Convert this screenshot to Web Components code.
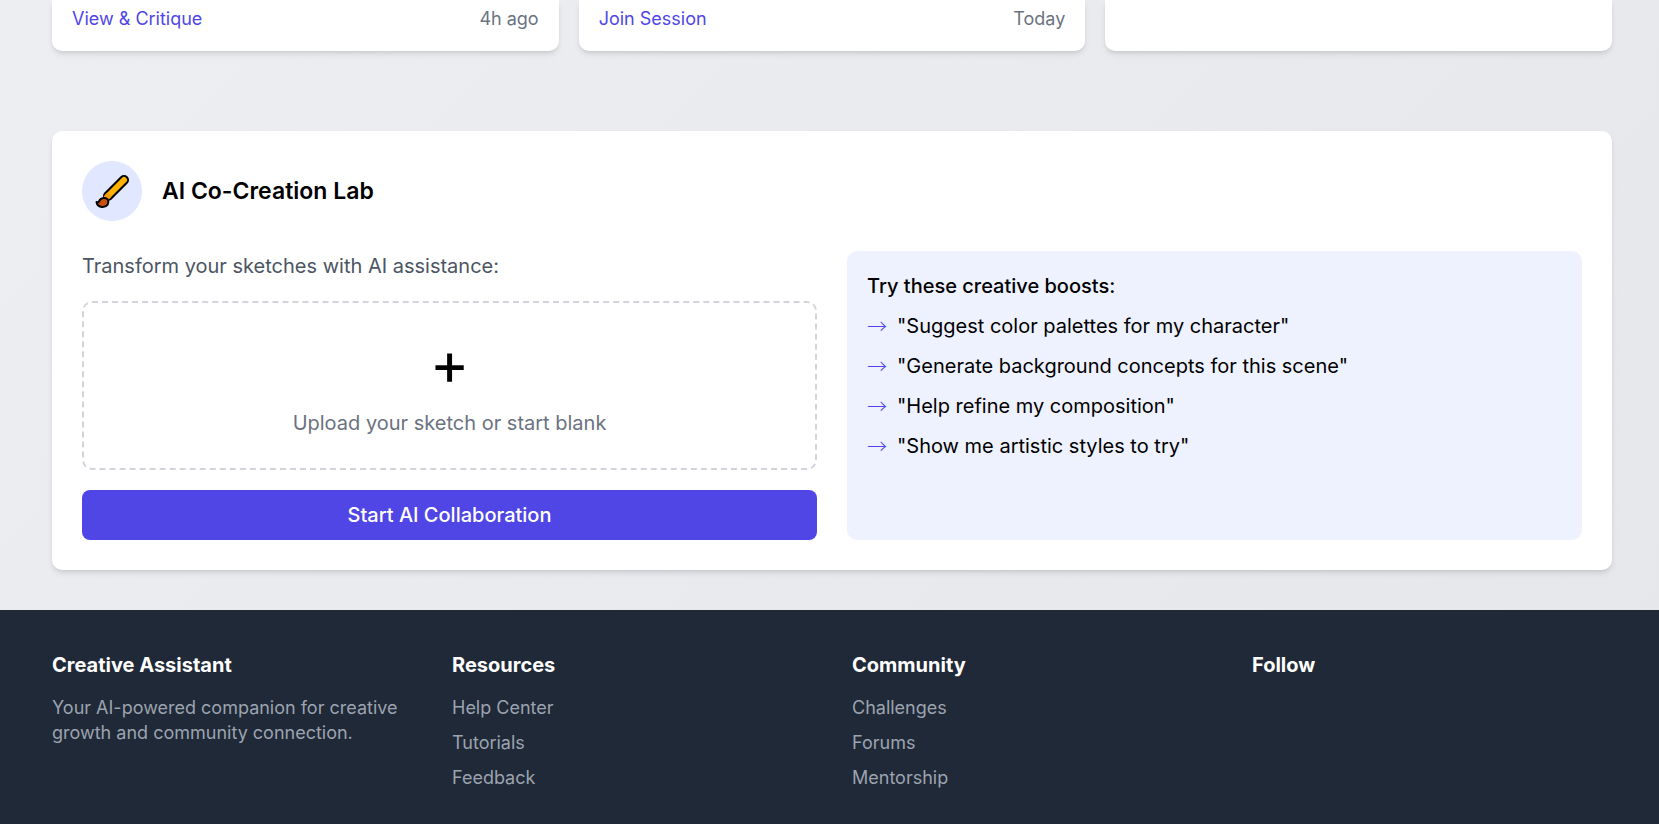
<!DOCTYPE html>
<html lang="en">
<head>
<meta charset="utf-8">
<meta name="viewport" content="width=device-width, initial-scale=1">
<title>Creative Assistant</title>
<style>
  html { --indigo: #4f46e5; }
  body {
    margin: 0;
    font: 20px/30px Inter, "Liberation Sans", sans-serif;
    color: #000;
    background: #e5e7eb;
  }
</style>
</head>
<body>
<creative-app></creative-app>
<script>
const define = (name, html) => {
  const template = document.createElement('template');
  template.innerHTML = html;
  customElements.define(name, class extends HTMLElement {
    constructor() {
      super();
      this.attachShadow({ mode: 'open' }).append(template.content.cloneNode(true));
    }
  });
};

define('feed-card', `
  <style>
    :host { display: block; box-sizing: border-box; padding: 6px 20px 20px; background: #fff;
      border-radius: 0 0 10px 10px; box-shadow: 0 4px 6px -1px rgb(0 0 0 / .1), 0 2px 4px -2px rgb(0 0 0 / .1); }
    .row { display: flex; justify-content: space-between; font-size: 18px; line-height: 25px; color: #6b7280; }
    ::slotted(a) { color: var(--indigo); text-decoration: none; }
  </style>
  <div class="row"><slot name="action"></slot><slot></slot></div>`);

define('brush-icon', `
  <style>
    :host { display: grid; place-items: center; width: 60px; height: 60px; border-radius: 50%; background: #e0e7ff; }
    svg { display: block; width: 36px; height: 36px; }
  </style>
  <svg viewBox="0 0 36 36" aria-hidden="true" fill="none" stroke-linecap="round" stroke-linejoin="round">
    <path stroke="#000" stroke-width="10" d="M14 23 30 7"/>
    <path stroke="#ffb300" stroke-width="6" d="M14 23 30 7"/>
    <path stroke="#f59e0b" stroke-width="6" d="m13 24 1-1"/>
    <path fill="#c8500f" stroke="#000" stroke-width="2" d="M9.500 25q3-.4 4.400 1.800 1.200 2.500-.3 4.800-2.100 2.800-5.600 2.400-4.700-.6-5.500-5 2 .8 2.800-1 .8-2.600 4.200-3Z"/>
  </svg>`);

define('upload-zone', `
  <style>
    :host { display: block; box-sizing: border-box; padding: 30px; border: 2px dashed #d1d5db; border-radius: 10px; text-align: center; }
    .plus { margin-bottom: 15px; font-size: 60px; line-height: 60px; }
    .label { color: #6b7280; }
  </style>
  <div class="plus">+</div>
  <div class="label"><slot></slot></div>`);

define('primary-button', `
  <style>
    :host { display: block; }
    button { display: block; width: 100%; padding: 10px 20px; border: 0; border-radius: 8px; background: var(--indigo);
      color: #fff; font: inherit; font-weight: 500; cursor: pointer; }
  </style>
  <button type="button"><slot></slot></button>`);

define('boost-item', `
  <style>
    :host { display: flex; gap: 10px; }
    .arrow { color: var(--indigo); font-family: "Noto Sans CJK SC", sans-serif; font-weight: 300; }
  </style>
  <span class="arrow">→</span><span><slot></slot></span>`);

define('boost-panel', `
  <style>
    :host { display: flex; flex-direction: column; gap: 10px; box-sizing: border-box; padding: 20px; border-radius: 10px; background: #eef2ff; }
    h3 { margin: 0; font-size: 20px; font-weight: 500; }
  </style>
  <h3>Try these creative boosts:</h3>
  <slot></slot>`);

define('creation-lab', `
  <style>
    :host { display: block; box-sizing: border-box; padding: 30px; background: #fff; border-radius: 10px;
      box-shadow: 0 4px 6px -1px rgb(0 0 0 / .1), 0 2px 4px -2px rgb(0 0 0 / .1); }
    header { display: flex; align-items: center; gap: 20px; margin-bottom: 30px; }
    h2 { margin: 0; font-size: 23px; font-weight: 600; }
    .columns { display: grid; grid-template-columns: repeat(2, minmax(0, 1fr)); gap: 30px; }
    .sketch { display: flex; flex-direction: column; gap: 20px; }
    p { margin: 0; color: #4b5563; }
  </style>
  <header><brush-icon></brush-icon><h2>AI Co-Creation Lab</h2></header>
  <div class="columns">
    <div class="sketch">
      <p>Transform your sketches with AI assistance:</p>
      <upload-zone>Upload your sketch or start blank</upload-zone>
      <primary-button>Start AI Collaboration</primary-button>
    </div>
    <boost-panel>
      <boost-item>"Suggest color palettes for my character"</boost-item>
      <boost-item>"Generate background concepts for this scene"</boost-item>
      <boost-item>"Help refine my composition"</boost-item>
      <boost-item>"Show me artistic styles to try"</boost-item>
    </boost-panel>
  </div>`);

define('footer-column', `
  <style>
    :host { display: block; }
    h4 { margin: 0 0 15px; font-size: 20px; font-weight: 700; color: #fff; }
    .items { display: flex; flex-direction: column; align-items: flex-start; gap: 10px; font-size: 18px; line-height: 25px; color: #9ca3af; }
    ::slotted(p) { margin: 0; }
    ::slotted(a) { color: inherit; text-decoration: none; }
  </style>
  <h4><slot name="title"></slot></h4>
  <div class="items"><slot></slot></div>`);

define('site-footer', `
  <style>
    :host { display: block; background: #1f2937; }
    footer { display: grid; grid-template-columns: repeat(4, minmax(0, 1fr)); gap: 40px; padding: 40px 47px 34px 52px; }
  </style>
  <footer>
    <footer-column><span slot="title">Creative Assistant</span>
      <p>Your AI-powered companion for creative growth and community connection.</p></footer-column>
    <footer-column><span slot="title">Resources</span>
      <a href="#help">Help Center</a><a href="#tutorials">Tutorials</a><a href="#feedback">Feedback</a></footer-column>
    <footer-column><span slot="title">Community</span>
      <a href="#challenges">Challenges</a><a href="#forums">Forums</a><a href="#mentorship">Mentorship</a></footer-column>
    <footer-column><span slot="title">Follow</span></footer-column>
  </footer>`);

define('creative-app', `
  <style>
    :host { display: flex; flex-direction: column; min-height: 100vh; }
    main { padding: 0 47px 40px 52px; background: linear-gradient(135deg, #edeef1, #e5e7eb); }
    .cards { display: grid; grid-template-columns: repeat(3, minmax(0, 1fr)); gap: 20px; margin-bottom: 80px; }
    site-footer { flex: 1; }
  </style>
  <main>
    <div class="cards">
      <feed-card><a slot="action" href="#critique">View &amp; Critique</a>4h ago</feed-card>
      <feed-card><a slot="action" href="#session">Join Session</a>Today</feed-card>
      <feed-card></feed-card>
    </div>
    <creation-lab></creation-lab>
  </main>
  <site-footer></site-footer>`);
</script>
</body>
</html>
